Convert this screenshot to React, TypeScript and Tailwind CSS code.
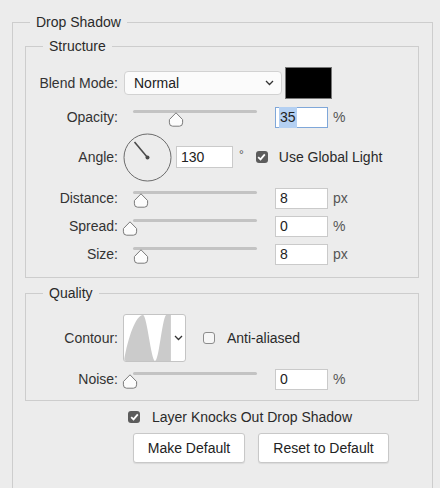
import React from 'react'

function Thumb({ left }: { left: number }) {
  return (
    <svg
      width="16"
      height="15"
      viewBox="0 0 16 15"
      className="absolute top-[5px]"
      style={{ left }}
    >
      <path
        d="M8 0.8 L14.6 7.6 L14.6 10.8 Q14.6 14.2 11.4 14.2 L4.6 14.2 Q1.4 14.2 1.4 10.8 L1.4 7.6 Z"
        fill="#fcfcfc"
        stroke="#7a7a7a"
        strokeWidth="1"
      />
    </svg>
  )
}

function Slider({ thumb }: { thumb: number }) {
  return (
    <div className="relative ml-[4px] h-[20px] w-[146px] shrink-0">
      <div className="absolute left-[11px] top-[3px] h-[3px] w-[124px] rounded-full bg-[#c3c3c3]" />
      <Thumb left={thumb} />
    </div>
  )
}

function NumField({ value, focused }: { value: string; focused?: boolean }) {
  return (
    <div
      className={
        focused
          ? 'ml-[7px] flex h-[21px] w-[53px] shrink-0 items-center border border-[#7fa7d9] bg-white pl-[3px] text-[14px] text-[#222]'
          : 'ml-[7px] flex h-[21px] w-[53px] shrink-0 items-center border border-[#cacaca] bg-white pl-[3px] text-[14px] text-[#222]'
      }
    >
      {focused ? <span className="bg-[#b4d0f2] px-[1px]">{value}</span> : <span className="px-[1px]">{value}</span>}
    </div>
  )
}

function Label({ children }: { children: React.ReactNode }) {
  return <div className="w-[92px] shrink-0 text-right text-[14px] text-[#333]">{children}</div>
}

function SliderRow({
  label,
  thumb,
  value,
  unit,
  focused,
  className,
}: {
  label: string
  thumb: number
  value: string
  unit: string
  focused?: boolean
  className: string
}) {
  return (
    <div className={`flex h-[20px] items-center ${className}`}>
      <Label>{label}</Label>
      <Slider thumb={thumb} />
      <NumField value={value} focused={focused} />
      <span className="ml-[5px] text-[14px] text-[#555]">{unit}</span>
    </div>
  )
}

function Chevron() {
  return (
    <svg width="9" height="6" viewBox="0 0 9 6">
      <path d="M1 1 L4.5 4.5 L8 1" fill="none" stroke="#333" strokeWidth="1.3" />
    </svg>
  )
}

function Check({ checked }: { checked?: boolean }) {
  if (!checked) {
    return <div className="h-[12px] w-[12px] shrink-0 rounded-[3px] border border-[#8c8c8c] bg-[#f6f6f6]" />
  }
  return (
    <div className="flex h-[12px] w-[12px] shrink-0 items-center justify-center rounded-[3px] bg-[#5c5c5c]">
      <svg width="9" height="8" viewBox="0 0 9 8">
        <path d="M1.2 4.2 L3.5 6.4 L7.8 1.4" fill="none" stroke="#fff" strokeWidth="1.8" />
      </svg>
    </div>
  )
}

export default function App() {
  return (
    <div className="flex h-[488px] w-[440px] flex-col overflow-hidden bg-[#ececec] pl-[12px] pr-[7px] pt-[14px] font-['Liberation_Sans',Arial,sans-serif] text-[#2a2a2a]">
      <fieldset className="m-0 min-w-0 flex-1 border border-b-0 border-[#cdcdcd] p-0">
        <legend className="ml-[17px] px-[6px] text-[14px] leading-[16px] text-[#2a2a2a]">Drop Shadow</legend>

        {/* Structure */}
        <fieldset className="ml-[12px] mr-[13px] mt-[8px] min-w-0 border border-[#cdcdcd] p-0 pb-[13px]">
          <legend className="ml-[17px] px-[6px] text-[14px] leading-[16px] text-[#2a2a2a]">Structure</legend>

          <div className="mt-[13px] flex h-[32px] items-center">
            <Label>Blend Mode:</Label>
            <div className="ml-[6px] flex h-[24px] w-[158px] items-center justify-between rounded-[4px] border border-[#d2d2d2] bg-[#fbfbfb] pl-[9px] pr-[7px] text-[14px] text-[#222]">
              <span>Normal</span>
              <Chevron />
            </div>
            <div className="ml-[3px] h-[32px] w-[47px] border border-[#777] bg-black" />
          </div>

          <SliderRow className="mt-[8px]" label="Opacity:" thumb={46} value="35" unit="%" focused />

          <div className="mt-[6px] flex h-[48px] items-center">
            <Label>Angle:</Label>
            <svg width="49" height="49" viewBox="0 0 49 49" className="ml-[5px] shrink-0">
              <circle cx="24.5" cy="24.5" r="23.5" fill="none" stroke="#6b6b6b" strokeWidth="1" />
              <line x1="24.5" y1="24.5" x2="11.5" y2="9" stroke="#4a4a4a" strokeWidth="1.6" />
              <circle cx="24.5" cy="24.5" r="2" fill="#4a4a4a" />
            </svg>
            <div className="ml-[4px] flex h-[22px] w-[57px] items-center border border-[#cacaca] bg-white pl-[4px] text-[14px] text-[#222]">
              130
            </div>
            <span className="ml-[6px] -mt-[4px] text-[12px] text-[#555]">°</span>
            <div className="ml-[12px]">
              <Check checked />
            </div>
            <span className="ml-[11px] text-[14px] text-[#2a2a2a]">Use Global Light</span>
          </div>

          <SliderRow className="mt-[7px]" label="Distance:" thumb={11} value="8" unit="px" />
          <SliderRow className="mt-[8px]" label="Spread:" thumb={0} value="0" unit="%" />
          <SliderRow className="mt-[8px]" label="Size:" thumb={11} value="8" unit="px" />
        </fieldset>

        {/* Quality */}
        <fieldset className="ml-[12px] mr-[13px] mt-[7px] min-w-0 border border-[#cdcdcd] p-0 pb-[11px]">
          <legend className="ml-[17px] px-[6px] text-[14px] leading-[16px] text-[#2a2a2a]">Quality</legend>

          <div className="mt-[13px] flex h-[48px] items-center">
            <Label>Contour:</Label>
            <div className="ml-[5px] flex h-[48px] w-[63px] shrink-0 overflow-hidden rounded-[3px] border border-[#c4c4c4] bg-white">
              <svg width="46" height="46" viewBox="0 0 46 46" preserveAspectRatio="none" className="shrink-0">
                <path
                  d="M0 46 C 4 22, 12 0, 19 0 C 23 0, 27 46, 31 46 C 35 46, 38 4, 42 0 L46 0 L46 46 Z"
                  fill="#cbcbcb"
                />
              </svg>
              <div className="flex flex-1 items-center justify-center border-l border-[#d0d0d0]">
                <Chevron />
              </div>
            </div>
            <div className="ml-[17px]">
              <Check />
            </div>
            <span className="ml-[12px] text-[14px] text-[#2a2a2a]">Anti-aliased</span>
          </div>

          <SliderRow className="mt-[7px]" label="Noise:" thumb={0} value="0" unit="%" />
        </fieldset>

        <div className="ml-[115px] mt-[8px] flex h-[16px] items-center">
          <Check checked />
          <span className="ml-[12px] text-[14px] text-[#2a2a2a]">Layer Knocks Out Drop Shadow</span>
        </div>

        <div className="ml-[120px] mt-[8px] flex gap-[13px]">
          <button className="h-[30px] w-[112px] rounded-[3px] border border-[#c8c8c8] bg-white text-[14px] text-[#222] shadow-[0_1px_1px_rgba(0,0,0,0.08)]">
            Make Default
          </button>
          <button className="h-[30px] w-[131px] rounded-[3px] border border-[#c8c8c8] bg-white text-[14px] text-[#222] shadow-[0_1px_1px_rgba(0,0,0,0.08)]">
            Reset to Default
          </button>
        </div>
      </fieldset>
    </div>
  )
}
